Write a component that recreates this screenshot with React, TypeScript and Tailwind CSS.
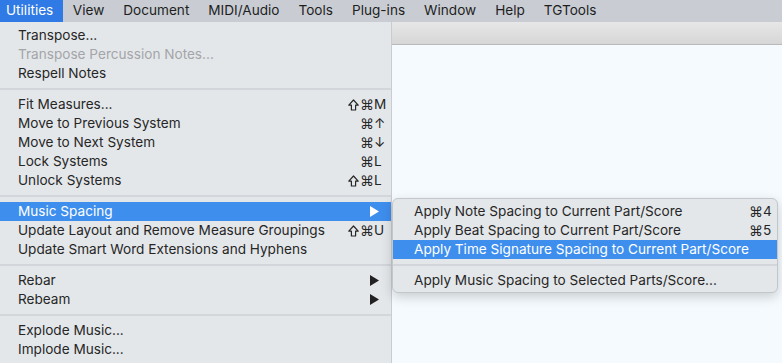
import React from 'react';

type Item =
  | { sep: true }
  | {
      sep?: false;
      label: string;
      mods?: string[];
      keyName?: string;
      disabled?: boolean;
      active?: boolean;
      sub?: boolean;
    };

const menuBar = ['Utilities', 'View', 'Document', 'MIDI/Audio', 'Tools', 'Plug-ins', 'Window', 'Help', 'TGTools'];

const utilities: Item[] = [
  { label: 'Transpose...' },
  { label: 'Transpose Percussion Notes...', disabled: true },
  { label: 'Respell Notes' },
  { sep: true },
  { label: 'Fit Measures...', mods: ['⇧', '⌘'], keyName: 'M' },
  { label: 'Move to Previous System', mods: ['⌘'], keyName: '↑' },
  { label: 'Move to Next System', mods: ['⌘'], keyName: '↓' },
  { label: 'Lock Systems', mods: ['⌘'], keyName: 'L' },
  { label: 'Unlock Systems', mods: ['⇧', '⌘'], keyName: 'L' },
  { sep: true },
  { label: 'Music Spacing', sub: true, active: true },
  { label: 'Update Layout and Remove Measure Groupings', mods: ['⇧', '⌘'], keyName: 'U' },
  { label: 'Update Smart Word Extensions and Hyphens' },
  { sep: true },
  { label: 'Rebar', sub: true },
  { label: 'Rebeam', sub: true },
  { sep: true },
  { label: 'Explode Music...' },
  { label: 'Implode Music...' },
];

const spacing: Item[] = [
  { label: 'Apply Note Spacing to Current Part/Score', mods: ['⌘'], keyName: '4' },
  { label: 'Apply Beat Spacing to Current Part/Score', mods: ['⌘'], keyName: '5' },
  { label: 'Apply Time Signature Spacing to Current Part/Score', active: true },
  { sep: true },
  { label: 'Apply Music Spacing to Selected Parts/Score...' },
];

function Arrow({ active }: { active?: boolean }) {
  return (
    <svg width="9" height="11" viewBox="0 0 9 11" className="mr-[12px]">
      <polygon points="0,0 9,5.5 0,11" fill={active ? '#ffffff' : '#222222'} />
    </svg>
  );
}

function ShiftIcon() {
  return (
    <svg width="11" height="12" viewBox="0 0 11 12" className="mr-[1px]">
      <path d="M5.5 1 L10.2 6.2 H7.6 V11 H3.4 V6.2 H0.8 Z" fill="none" stroke="#262626" strokeWidth="1.2" strokeLinejoin="round" />
    </svg>
  );
}

function MenuRows({ items, pl, pr, keyW }: { items: Item[]; pl: string; pr: string; keyW: string }) {
  return (
    <>
      {items.map((item, i) => {
        if (item.sep) {
          return (
            <div key={i} className="h-[12px] flex items-center">
              <div className="h-[2px] w-full bg-[#d3d6da]" />
            </div>
          );
        }
        return (
          <div
            key={i}
            className={
              'h-[19px] flex items-center justify-between ' +
              pl +
              (item.active ? ' bg-[#3e8eee] text-white' : item.disabled ? ' text-[#a3a5a8]' : ' text-[#262626]')
            }
          >
            <span>{item.label}</span>
            {item.sub ? (
              <Arrow active={item.active} />
            ) : item.keyName ? (
              <span className={'flex items-center ' + pr}>
                {item.mods?.map((m) =>
                  m === '⇧' ? (
                    <ShiftIcon key={m} />
                  ) : (
                    <span
                      key={m}
                      className="w-[12px] text-center text-[14px]"
                      style={{ fontFamily: '"DejaVu Sans", sans-serif' }}
                    >
                      {m}
                    </span>
                  )
                )}
                <span className={'text-left pl-[2px] ' + keyW}>{item.keyName}</span>
              </span>
            ) : null}
          </div>
        );
      })}
    </>
  );
}

export default function App() {
  return (
    <div
      className="relative w-[782px] h-[363px] overflow-hidden bg-[#f4fafd] text-[13.6px] leading-none"
      style={{ fontFamily: 'Inter, "Liberation Sans", sans-serif' }}
    >
      <div className="h-[22px] bg-[#c9cdd3] flex items-center">
        {menuBar.map((m, i) => (
          <div
            key={m}
            className={
              'h-full flex items-center ' +
              (i === 0 ? 'bg-[#2f7ae4] text-white pl-[6px] pr-[10px]' : 'text-[#1e1e1e] px-[9.5px]')
            }
          >
            {m}
          </div>
        ))}
      </div>
      <div className="h-[23px] bg-gradient-to-b from-[#e7e7e7] to-[#d6d6d6] border-b border-[#b9b9b9]" />

      <div className="absolute left-0 top-[22px] w-[392px] h-[345px] bg-[#e4e7ea] border-r border-[#c9ccd0] pt-[4px]">
        <MenuRows items={utilities} pl="pl-[18px]" pr="pr-[5px]" keyW="w-[14px]" />
      </div>

      <div className="absolute left-[392px] top-[198px] w-[386px] h-[95px] bg-[#e4e7ea] rounded-[6px] border border-[#c3c6ca] shadow-[0_4px_12px_rgba(0,0,0,0.18)] pt-[3px] overflow-hidden">
        <MenuRows items={spacing} pl="pl-[21px]" pr="pr-[4px]" keyW="w-[12px]" />
      </div>
    </div>
  );
}
